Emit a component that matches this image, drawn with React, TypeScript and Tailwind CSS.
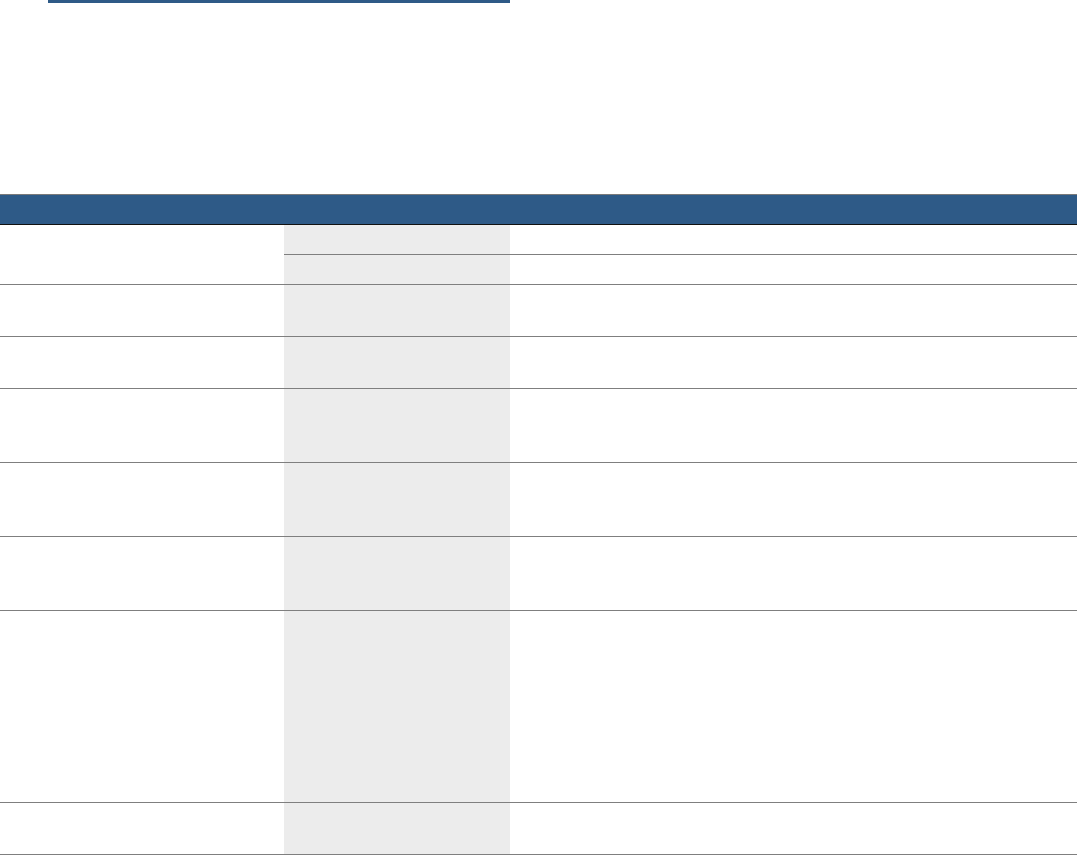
const rows = [
  { h: 'h-[52px]' },
  { h: 'h-[52px]' },
  { h: 'h-[74px]' },
  { h: 'h-[74px]' },
  { h: 'h-[74px]' },
  { h: 'h-[192px]' },
  { h: 'h-[52px]' },
]

export default function App() {
  return (
    <div className="min-h-[855px] w-[1078px] bg-white font-['Liberation_Sans',sans-serif]">
      {/* Title underline */}
      <div className="ml-[48px] h-[3px] w-[462px] bg-[#2e5a87]" />

      {/* Table */}
      <div className="mt-[191px] w-[1077px] border-t border-[#7a7a7a]">
        <div className="h-[29px] bg-[#2e5a87]" />
        <div className="h-px bg-[#111111]" />

        {/* Row with split right side */}
        <div className="flex border-b border-[#7f7f7f]">
          <div className="w-[284px] shrink-0" />
          <div className="flex flex-1 flex-col">
            <div className="flex h-[30px] border-b border-[#7f7f7f]">
              <div className="w-[226px] shrink-0 bg-[#ececec]" />
              <div className="flex-1" />
            </div>
            <div className="flex h-[29px]">
              <div className="w-[226px] shrink-0 bg-[#ececec]" />
              <div className="flex-1" />
            </div>
          </div>
        </div>

        {rows.map((r, i) => (
          <div key={i} className={`flex border-b border-[#7f7f7f] ${r.h}`}>
            <div className="w-[284px] shrink-0" />
            <div className="w-[226px] shrink-0 bg-[#ececec]" />
            <div className="flex-1" />
          </div>
        ))}
      </div>
    </div>
  )
}
